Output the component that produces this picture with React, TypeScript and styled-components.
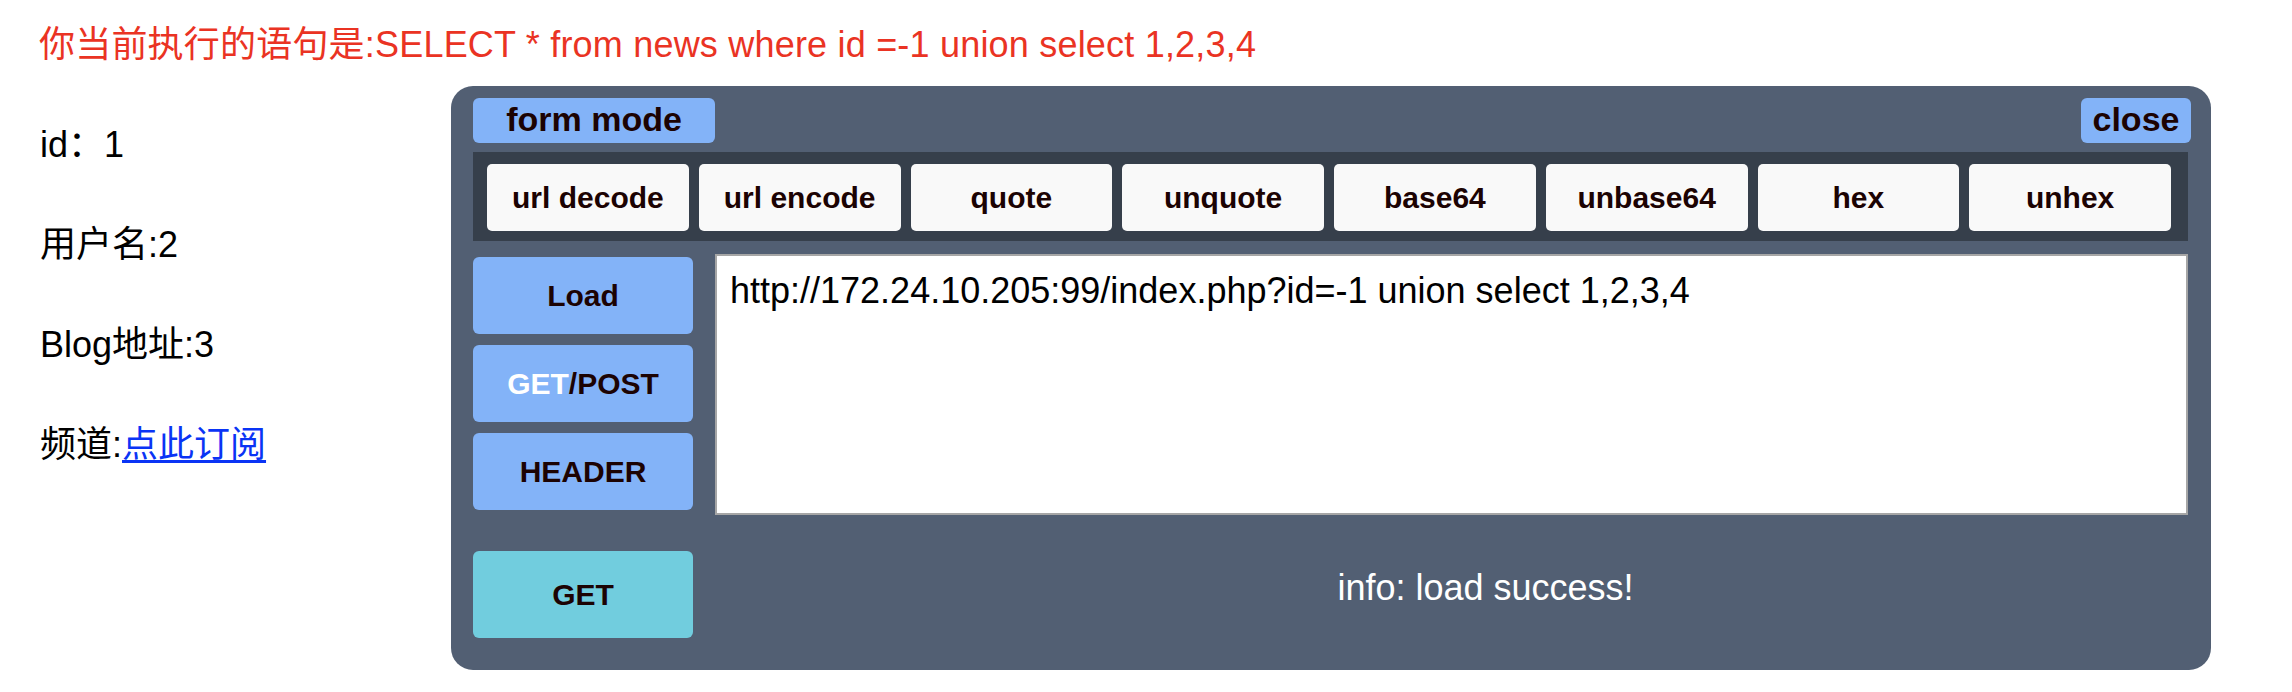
import React from "react";
import styled, { createGlobalStyle } from "styled-components";

const GlobalStyle = createGlobalStyle`
  html, body {
    margin: 0;
    padding: 0;
    background: #ffffff;
  }
  body {
    font-family: "Liberation Sans", "Noto Sans CJK SC", Arial, sans-serif;
    color: #000000;
  }
`;

const Page = styled.div`
  width: 2292px;
  height: 692px;
  overflow: hidden;
  display: flex;
  flex-direction: column;
`;

const Query = styled.div`
  height: 86px;
  box-sizing: border-box;
  padding: 27px 0 0 39px;
  font-size: 36px;
  line-height: 36px;
  color: #ea3323;
  white-space: nowrap;
  letter-spacing: 0.2px;
`;

const Body = styled.div`
  display: flex;
  align-items: flex-start;
`;

const Fields = styled.div`
  width: 451px;
  box-sizing: border-box;
  padding: 41px 0 0 40px;
  display: flex;
  flex-direction: column;
  gap: 64px;
`;

const Field = styled.div`
  font-size: 36px;
  line-height: 36px;
  white-space: nowrap;
`;

const Link = styled.a`
  color: #0a34f5;
  text-decoration: underline;
  text-underline-offset: 3px;
`;

const HackBar = styled.div`
  width: 1760px;
  height: 584px;
  box-sizing: border-box;
  background: #525f73;
  border-radius: 22px;
  padding: 12px 23px 32px 22px;
  display: flex;
  flex-direction: column;
  font-family: "Liberation Sans", Arial, sans-serif;
`;

const TopRow = styled.div`
  display: flex;
  justify-content: space-between;
  height: 45px;
`;

const TabButton = styled.div<{ $w: number; $shift?: number }>`
  width: ${(p) => p.$w}px;
  height: 45px;
  margin-right: ${(p) => -(p.$shift || 0)}px;
  background: #83b3f8;
  border-radius: 6px;
  display: flex;
  align-items: center;
  justify-content: center;
  font-size: 34px;
  font-weight: bold;
  color: #1c0303;
  padding-bottom: 3px;
  box-sizing: border-box;
`;

const Toolbar = styled.div`
  margin-top: 9px;
  height: 89px;
  box-sizing: border-box;
  background: #363f4b;
  padding: 12px 17px 10px 14px;
  display: grid;
  grid-template-columns: repeat(8, 1fr);
  gap: 10px;
`;

const ToolButton = styled.div`
  background: #f9f9f9;
  border-radius: 5px;
  display: flex;
  align-items: center;
  justify-content: center;
  font-size: 30px;
  font-weight: bold;
  color: #1c0303;
  white-space: nowrap;
`;

const MainRow = styled.div`
  margin-top: 13px;
  display: flex;
  gap: 22px;
  height: 261px;
`;

const SideColumn = styled.div`
  width: 220px;
  padding-top: 3px;
  display: flex;
  flex-direction: column;
  gap: 11px;
`;

const SideButton = styled.div<{ $bg?: string; $h?: number }>`
  width: 220px;
  height: ${(p) => p.$h || 77}px;
  background: ${(p) => p.$bg || "#83b3f8"};
  border-radius: 6px;
  display: flex;
  align-items: center;
  justify-content: center;
  font-size: 30px;
  font-weight: bold;
  color: #1c0303;
  flex-shrink: 0;
`;

const Light = styled.span`
  color: #ffffff;
`;

const UrlBox = styled.div`
  flex: 1;
  background: #ffffff;
  border: 2px solid #a6a6a6;
  box-sizing: border-box;
  padding: 14px 13px;
  font-size: 36px;
  line-height: 41px;
  color: #000000;
  white-space: nowrap;
`;

const BottomRow = styled.div`
  margin-top: 36px;
  display: flex;
  gap: 22px;
  align-items: flex-start;
`;

const Info = styled.div`
  flex: 1;
  padding: 19px 0 0 68px;
  text-align: center;
  font-size: 36px;
  line-height: 36px;
  color: #ffffff;
`;

const tools = [
  "url decode",
  "url encode",
  "quote",
  "unquote",
  "base64",
  "unbase64",
  "hex",
  "unhex",
];

export default function App() {
  return (
    <>
      <GlobalStyle />
      <Page>
        <Query>你当前执行的语句是:SELECT * from news where id =-1 union select 1,2,3,4</Query>
        <Body>
          <Fields>
            <Field>id：1</Field>
            <Field>用户名:2</Field>
            <Field>Blog地址:3</Field>
            <Field>
              频道:<Link href="#">点此订阅</Link>
            </Field>
          </Fields>
          <HackBar>
            <TopRow>
              <TabButton $w={242}>form mode</TabButton>
              <TabButton $w={110} $shift={3}>close</TabButton>
            </TopRow>
            <Toolbar>
              {tools.map((t) => (
                <ToolButton key={t}>{t}</ToolButton>
              ))}
            </Toolbar>
            <MainRow>
              <SideColumn>
                <SideButton>Load</SideButton>
                <SideButton>
                  <Light>GET</Light>/POST
                </SideButton>
                <SideButton>HEADER</SideButton>
              </SideColumn>
              <UrlBox>http://172.24.10.205:99/index.php?id=-1 union select 1,2,3,4</UrlBox>
            </MainRow>
            <BottomRow>
              <SideButton $bg="#71cdde" $h={87}>GET</SideButton>
              <Info>info: load success!</Info>
            </BottomRow>
          </HackBar>
        </Body>
      </Page>
    </>
  );
}
